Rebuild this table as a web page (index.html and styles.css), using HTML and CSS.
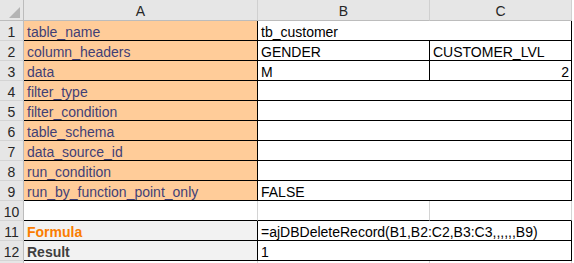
FILE: index.html
```html
<!DOCTYPE html>
<html>
<head>
<meta charset="utf-8">
<link rel="stylesheet" href="styles.css">
</head>
<body>
<div class="sheet">
  <div class="corner"><svg class="tri" width="24" height="21" viewBox="0 0 24 21"><polygon points="20,7 20,18 9,18" fill="#b4b4b4"/></svg></div>
  <div class="hdr">A</div>
  <div class="hdr">B</div>
  <div class="hdr">C</div>
  <div class="edge"></div>

  <div class="rh">1</div>
  <div class="c in">table_name</div>
  <div class="c span">tb_customer</div>
  <div class="edge"></div>

  <div class="rh">2</div>
  <div class="c in">column_headers</div>
  <div class="c">GENDER</div>
  <div class="c">CUSTOMER_LVL</div>
  <div class="edge"></div>

  <div class="rh">3</div>
  <div class="c in">data</div>
  <div class="c">M</div>
  <div class="c num">2</div>
  <div class="edge"></div>

  <div class="rh">4</div>
  <div class="c in">filter_type</div>
  <div class="c span"></div>
  <div class="edge"></div>

  <div class="rh">5</div>
  <div class="c in">filter_condition</div>
  <div class="c span"></div>
  <div class="edge"></div>

  <div class="rh">6</div>
  <div class="c in">table_schema</div>
  <div class="c span"></div>
  <div class="edge"></div>

  <div class="rh">7</div>
  <div class="c in">data_source_id</div>
  <div class="c span"></div>
  <div class="edge"></div>

  <div class="rh">8</div>
  <div class="c in">run_condition</div>
  <div class="c span"></div>
  <div class="edge"></div>

  <div class="rh">9</div>
  <div class="c in">run_by_function_point_only</div>
  <div class="c span">FALSE</div>
  <div class="edge"></div>

  <div class="rh">10</div>
  <div class="c gr"></div>
  <div class="c gr"></div>
  <div class="c gr"></div>
  <div class="edge"></div>

  <div class="rh">11</div>
  <div class="c calc">Formula</div>
  <div class="c span">=ajDBDeleteRecord(B1,B2:C2,B3:C3,,,,,,B9)</div>
  <div class="edge"></div>

  <div class="rh">12</div>
  <div class="c out">Result</div>
  <div class="c span">1</div>
  <div class="edge"></div>

  <div class="rh rh-last"></div>
  <div class="c grid"></div>
  <div class="c grid"></div>
  <div class="c grid"></div>
  <div class="edge"></div>
</div>
</body>
</html>
```

FILE: styles.css
```css
html, body {
  margin: 0;
  padding: 0;
  background: #ffffff;
  overflow: hidden;
}

.sheet {
  display: grid;
  grid-template-columns: 24px 234px 172px 142px 1fr;
  grid-template-rows: 21px repeat(12, 20px) 2px;
  width: 574px;
  height: 263px;
  font-family: "Liberation Sans", Arial, sans-serif;
  font-size: 14px;
  line-height: 16px;
  color: #000000;
}

.sheet > div {
  box-sizing: border-box;
  white-space: nowrap;
  overflow: hidden;
}

.corner {
  background: #e6e6e6;
  border-right: 1px solid #bcbcbc;
  border-bottom: 1px solid #bcbcbc;
}

.tri {
  display: block;
}

.hdr {
  background: #e6e6e6;
  border-right: 1px solid #d0d0d0;
  border-bottom: 1px solid #bcbcbc;
  color: #262626;
  display: flex;
  align-items: flex-end;
  justify-content: center;
  padding-bottom: 1px;
}

.edge {
  background: #ffffff;
}

.rh {
  background: #e6e6e6;
  border-right: 1px solid #bcbcbc;
  border-bottom: 1px solid #d4d4d4;
  color: #262626;
  display: flex;
  align-items: flex-end;
  justify-content: center;
}

.rh-last {
  border-bottom: none;
}

.c {
  border-right: 1px solid #000000;
  border-bottom: 1px solid #000000;
  display: flex;
  align-items: flex-end;
  padding-left: 3px;
  padding-right: 2px;
}

.span {
  grid-column: 3 / 5;
  overflow: visible;
}

.num {
  justify-content: flex-end;
}

.in {
  background: #ffcc99;
  color: #3f3f76;
}

.gr {
  border-right-color: #d4d4d4;
}

.grid {
  border-right-color: #d4d4d4;
  border-bottom: none;
}

.calc {
  background: #f2f2f2;
  color: #fa7d00;
  font-weight: bold;
}

.out {
  background: #f2f2f2;
  color: #3f3f3f;
  font-weight: bold;
}
```
